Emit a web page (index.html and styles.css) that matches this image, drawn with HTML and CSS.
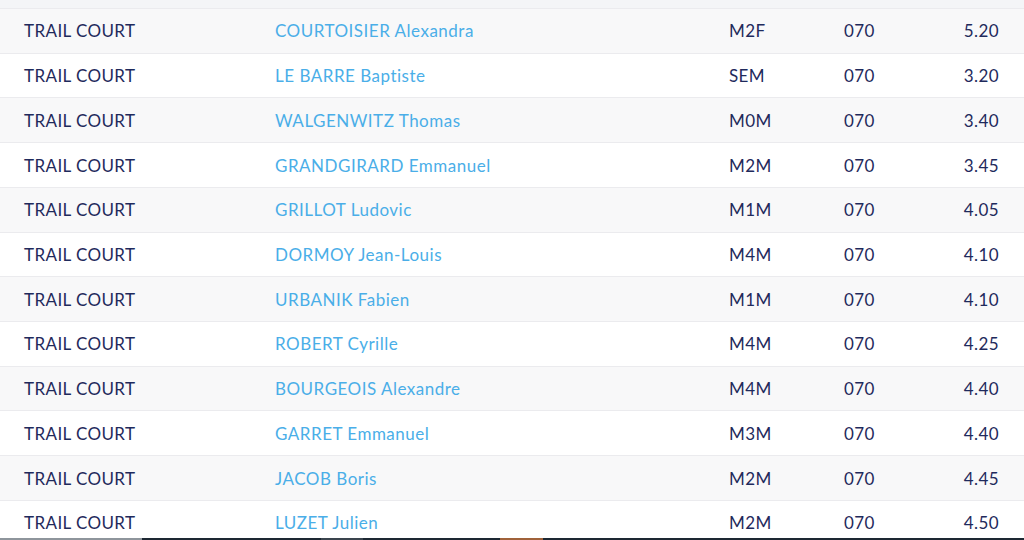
FILE: index.html
```html
<!DOCTYPE html>
<html lang="fr">
<head>
<meta charset="utf-8">
<title>Résultats</title>
<link rel="stylesheet" href="styles.css">
</head>
<body>
<div class="results">
  <div class="row row-cut"></div>
  <div class="row alt"><span class="c-course">TRAIL COURT</span><span class="c-name">COURTOISIER Alexandra</span><span class="c-cat">M2F</span><span class="c-club">070</span><span class="c-time">5.20</span></div>
  <div class="row"><span class="c-course">TRAIL COURT</span><span class="c-name">LE BARRE Baptiste</span><span class="c-cat">SEM</span><span class="c-club">070</span><span class="c-time">3.20</span></div>
  <div class="row alt"><span class="c-course">TRAIL COURT</span><span class="c-name">WALGENWITZ Thomas</span><span class="c-cat">M0M</span><span class="c-club">070</span><span class="c-time">3.40</span></div>
  <div class="row"><span class="c-course">TRAIL COURT</span><span class="c-name">GRANDGIRARD Emmanuel</span><span class="c-cat">M2M</span><span class="c-club">070</span><span class="c-time">3.45</span></div>
  <div class="row alt"><span class="c-course">TRAIL COURT</span><span class="c-name">GRILLOT Ludovic</span><span class="c-cat">M1M</span><span class="c-club">070</span><span class="c-time">4.05</span></div>
  <div class="row"><span class="c-course">TRAIL COURT</span><span class="c-name">DORMOY Jean-Louis</span><span class="c-cat">M4M</span><span class="c-club">070</span><span class="c-time">4.10</span></div>
  <div class="row alt"><span class="c-course">TRAIL COURT</span><span class="c-name">URBANIK Fabien</span><span class="c-cat">M1M</span><span class="c-club">070</span><span class="c-time">4.10</span></div>
  <div class="row"><span class="c-course">TRAIL COURT</span><span class="c-name">ROBERT Cyrille</span><span class="c-cat">M4M</span><span class="c-club">070</span><span class="c-time">4.25</span></div>
  <div class="row alt"><span class="c-course">TRAIL COURT</span><span class="c-name">BOURGEOIS Alexandre</span><span class="c-cat">M4M</span><span class="c-club">070</span><span class="c-time">4.40</span></div>
  <div class="row"><span class="c-course">TRAIL COURT</span><span class="c-name">GARRET Emmanuel</span><span class="c-cat">M3M</span><span class="c-club">070</span><span class="c-time">4.40</span></div>
  <div class="row alt"><span class="c-course">TRAIL COURT</span><span class="c-name">JACOB Boris</span><span class="c-cat">M2M</span><span class="c-club">070</span><span class="c-time">4.45</span></div>
  <div class="row"><span class="c-course">TRAIL COURT</span><span class="c-name">LUZET Julien</span><span class="c-cat">M2M</span><span class="c-club">070</span><span class="c-time">4.50</span></div>
</div>
<div class="taskbar">
  <span class="tb-seg tb-light"></span>
  <span class="tb-seg tb-dark"></span>
  <span class="tb-seg tb-mid"></span>
  <span class="tb-seg tb-dark2"></span>
  <span class="tb-seg tb-orange"></span>
  <span class="tb-seg tb-rest"></span>
</div>
</body>
</html>
```

FILE: styles.css
```css
html, body {
  margin: 0;
  padding: 0;
  background: #ffffff;
  overflow: hidden;
}

body {
  font-family: Lato, "Noto Sans", "DejaVu Sans", sans-serif;
  font-size: 17px;
  letter-spacing: 0.4px;
  color: #1f2a5c;
}

.results {
  display: flex;
  flex-direction: column;
}

.row {
  display: grid;
  grid-template-columns: 251px 454px 115px 130px 25px;
  align-items: center;
  height: 43.73px;
  padding-left: 24px;
  border-bottom: 1px solid #ebebee;
  background: #ffffff;
}

.row.alt {
  background: #f8f8f9;
}

.row.row-cut {
  height: 8px;
  background: #f4f5f7;
}

.c-name {
  color: #4aaee8;
  letter-spacing: 0.5px;
}

.c-time {
  justify-self: end;
  white-space: nowrap;
}

.taskbar {
  position: fixed;
  left: 0;
  right: 0;
  bottom: 0;
  height: 2px;
  display: flex;
  background: #1d2833;
}

.tb-seg {
  display: block;
  height: 100%;
}

.tb-light { width: 142px; background: #8e959c; }
.tb-dark { width: 179px; background: #1d2833; }
.tb-mid { width: 42px; background: #3a444e; }
.tb-dark2 { width: 137px; background: #1d2833; }
.tb-orange { width: 43px; background: #a0623a; }
.tb-rest { flex: 1; background: #1d2833; }
```
